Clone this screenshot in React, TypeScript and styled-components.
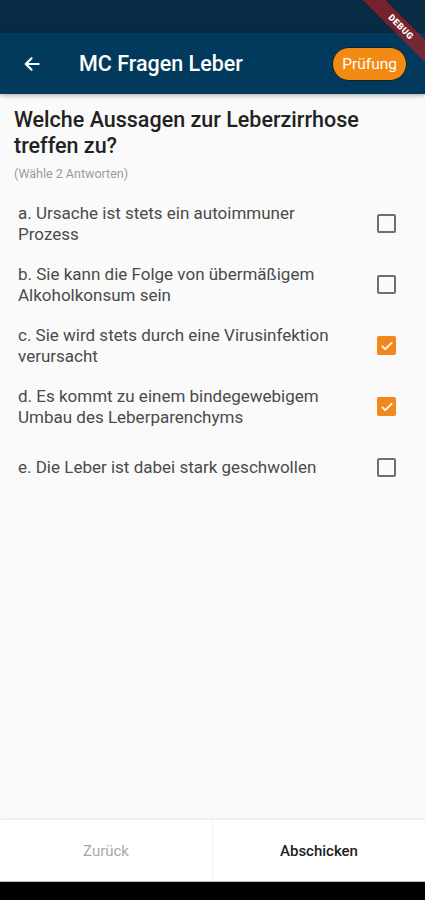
import React, { useState } from 'react';
import styled, { createGlobalStyle } from 'styled-components';

const GlobalStyle = createGlobalStyle`
  html, body {
    margin: 0;
    padding: 0;
    background: #000;
  }
  body {
    font-family: Roboto, "Noto Sans", "Liberation Sans", sans-serif;
  }
`;

const Screen = styled.div`
  position: relative;
  width: 425px;
  height: 900px;
  display: flex;
  flex-direction: column;
  background: #fafafa;
  overflow: hidden;
`;

const StatusBar = styled.div`
  height: 33px;
  background: #072a45;
  flex-shrink: 0;
`;

const AppBar = styled.header`
  height: 61px;
  flex-shrink: 0;
  display: flex;
  align-items: center;
  padding: 0 18px 0 20px;
  background: #023a5d;
  box-shadow: 0 2px 4px rgba(0, 0, 0, 0.25);
  z-index: 1;
`;

const BackButton = styled.button`
  width: 24px;
  height: 24px;
  padding: 0;
  border: none;
  background: none;
  display: flex;
  align-items: center;
  justify-content: center;
  color: #fff;
`;

const Title = styled.h1`
  flex: 1;
  margin: 0 0 0 35px;
  font-size: 21.5px;
  font-weight: 500;
  color: #fff;
`;

const ExamButton = styled.button`
  height: 34px;
  padding: 0 9px;
  border: 1px solid #13202c;
  border-radius: 17px;
  background: #f38a14;
  color: #fff;
  font-family: inherit;
  font-size: 15.5px;
  font-weight: 400;
`;

// flutter debug banner in the corner
const DebugRibbon = styled.div`
  position: absolute;
  top: 19px;
  right: -26px;
  width: 100px;
  height: 16px;
  transform: rotate(45deg);
  background: rgba(183, 28, 28, 0.63);
  color: #fff;
  font-size: 9px;
  font-weight: 900;
  letter-spacing: 0.5px;
  text-align: center;
  line-height: 16px;
  z-index: 2;
`;

const Content = styled.main`
  flex: 1;
  padding: 13px 29px 0 14px;
`;

const Question = styled.h2`
  margin: 0;
  font-size: 21.5px;
  font-weight: 500;
  line-height: 26px;
  color: #222;
`;

const Hint = styled.p`
  margin: 7px 0 12px;
  font-size: 12.5px;
  line-height: 15px;
  color: #9a9a9a;
`;

const OptionList = styled.div`
  display: flex;
  flex-direction: column;
  padding-left: 4px;
`;

const OptionRow = styled.label`
  min-height: 61px;
  display: flex;
  align-items: center;
  gap: 27px;
`;

const OptionText = styled.span`
  flex: 1;
  font-size: 17px;
  line-height: 20.5px;
  color: #4a4a4a;
`;

const Box = styled.span<{ $checked: boolean }>`
  width: 19px;
  height: 19px;
  box-sizing: border-box;
  border-radius: 2px;
  border: ${({ $checked }) => ($checked ? 'none' : '2px solid #6e6e6e')};
  background: ${({ $checked }) => ($checked ? '#f2871c' : 'transparent')};
  display: flex;
  align-items: center;
  justify-content: center;
  flex-shrink: 0;
`;

const Footer = styled.footer`
  height: 61px;
  flex-shrink: 0;
  display: grid;
  grid-template-columns: 1fr 1px 1fr;
  background: #fff;
  border-top: 1px solid #ededed;
  border-bottom: 1px solid #bdbdbd;
  box-shadow: 0 -1px 3px rgba(0, 0, 0, 0.04);
`;

const Divider = styled.div`
  background: #f2f2f2;
`;

const FooterButton = styled.button<{ $primary?: boolean }>`
  border: none;
  background: none;
  font-family: inherit;
  font-size: 15px;
  font-weight: ${({ $primary }) => ($primary ? 500 : 400)};
  color: ${({ $primary }) => ($primary ? '#1d1d1d' : '#a8a8a8')};
  padding: 0;
`;

const NavBar = styled.div`
  height: 18px;
  flex-shrink: 0;
  background: #000;
`;

const options = [
  'a. Ursache ist stets ein autoimmuner Prozess',
  'b. Sie kann die Folge von übermäßigem Alkoholkonsum sein',
  'c. Sie wird stets durch eine Virusinfektion verursacht',
  'd. Es kommt zu einem bindegewebigem Umbau des Leberparenchyms',
  'e. Die Leber ist dabei stark geschwollen',
];

const App = () => {
  const [checked, setChecked] = useState([false, false, true, true, false]);

  const toggle = (index: number) => {
    setChecked(prev => prev.map((v, i) => (i === index ? !v : v)));
  };

  return (
    <Screen>
      <GlobalStyle />
      <StatusBar />
      <AppBar>
        <BackButton aria-label="Zurück">
          <svg width="20" height="20" viewBox="0 0 24 24" fill="none">
            <path
              d="M20 12H5M11.5 5L4.5 12l7 7"
              stroke="#fff"
              strokeWidth="2.6"
              strokeLinecap="round"
              strokeLinejoin="round"
            />
          </svg>
        </BackButton>
        <Title>MC Fragen Leber</Title>
        <ExamButton>Prüfung</ExamButton>
      </AppBar>
      <DebugRibbon>DEBUG</DebugRibbon>
      <Content>
        <Question>Welche Aussagen zur Leberzirrhose treffen zu?</Question>
        <Hint>(Wähle 2 Antworten)</Hint>
        <OptionList>
          {options.map((text, i) => (
            <OptionRow key={text} onClick={() => toggle(i)}>
              <OptionText>{text}</OptionText>
              <Box $checked={checked[i]}>
                {checked[i] && (
                  <svg width="14" height="14" viewBox="0 0 24 24" fill="none">
                    <path
                      d="M4 12.5l5 5L20 6.5"
                      stroke="#fff"
                      strokeWidth="3"
                      strokeLinecap="round"
                      strokeLinejoin="round"
                    />
                  </svg>
                )}
              </Box>
            </OptionRow>
          ))}
        </OptionList>
      </Content>
      <Footer>
        <FooterButton>Zurück</FooterButton>
        <Divider />
        <FooterButton $primary>Abschicken</FooterButton>
      </Footer>
      <NavBar />
    </Screen>
  );
};

export default App;
